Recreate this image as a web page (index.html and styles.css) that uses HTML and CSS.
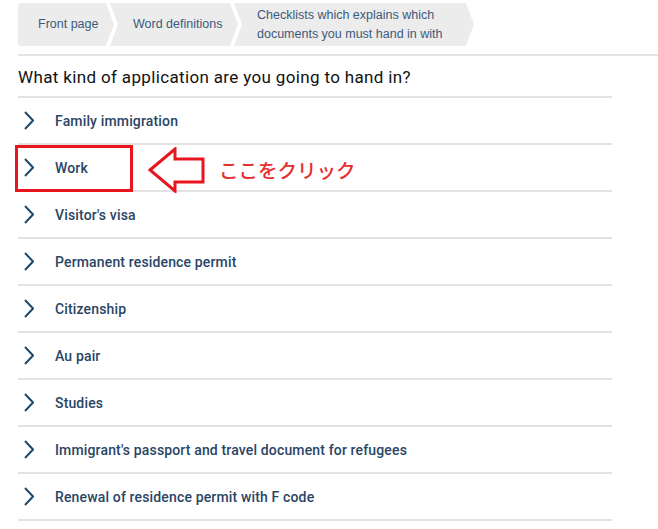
FILE: index.html
```html
<!DOCTYPE html>
<html>
<head>
<meta charset="utf-8">
<link rel="stylesheet" href="styles.css">
</head>
<body>
<nav class="crumbs">
  <a class="crumb first">Front page</a>
  <a class="crumb second">Word definitions</a>
  <a class="crumb third">Checklists which explains which<br>documents you must hand in with</a>
</nav>
<main class="content">
  <h1 class="title">What kind of application are you going to hand in?</h1>
  <ul class="list">
    <li class="row"><svg class="chev" viewBox="0 0 10 19"><path d="M1 1 L9 9.5 L1 18" /></svg><span>Family immigration</span></li>
    <li class="row"><svg class="chev" viewBox="0 0 10 19"><path d="M1 1 L9 9.5 L1 18" /></svg><span>Work</span></li>
    <li class="row"><svg class="chev" viewBox="0 0 10 19"><path d="M1 1 L9 9.5 L1 18" /></svg><span>Visitor's visa</span></li>
    <li class="row"><svg class="chev" viewBox="0 0 10 19"><path d="M1 1 L9 9.5 L1 18" /></svg><span>Permanent residence permit</span></li>
    <li class="row"><svg class="chev" viewBox="0 0 10 19"><path d="M1 1 L9 9.5 L1 18" /></svg><span>Citizenship</span></li>
    <li class="row"><svg class="chev" viewBox="0 0 10 19"><path d="M1 1 L9 9.5 L1 18" /></svg><span>Au pair</span></li>
    <li class="row"><svg class="chev" viewBox="0 0 10 19"><path d="M1 1 L9 9.5 L1 18" /></svg><span>Studies</span></li>
    <li class="row"><svg class="chev" viewBox="0 0 10 19"><path d="M1 1 L9 9.5 L1 18" /></svg><span>Immigrant's passport and travel document for refugees</span></li>
    <li class="row"><svg class="chev" viewBox="0 0 10 19"><path d="M1 1 L9 9.5 L1 18" /></svg><span>Renewal of residence permit with F code</span></li>
  </ul>
  <div class="highlight"></div>
  <svg class="arrow" viewBox="0 0 60 46"><polygon points="2,23 27,2 27,12 55,12 55,35 27,35 27,44" /></svg>
  <span class="note">ここをクリック</span>
</main>
</body>
</html>
```

FILE: styles.css
```css
html, body {
  margin: 0;
  padding: 0;
  background: #ffffff;
}

.crumbs {
  display: flex;
  margin: 3px 0 0 18px;
  padding-bottom: 8px;
  border-bottom: 2px solid #e4e4e4;
}

.crumb {
  display: flex;
  align-items: center;
  height: 43px;
  background: #ececec;
  color: #3d5a7c;
  font-family: "Liberation Sans", Arial, sans-serif;
  font-size: 12.5px;
  line-height: 19px;
  box-sizing: border-box;
}

.first {
  width: 96px;
  padding-left: 20px;
  border-radius: 3px 0 0 3px;
  clip-path: polygon(0 0, calc(100% - 8px) 0, 100% 50%, calc(100% - 8px) 100%, 0 100%);
}

.second {
  width: 128px;
  margin-left: -4px;
  padding-left: 23px;
  clip-path: polygon(0 0, calc(100% - 8px) 0, 100% 50%, calc(100% - 8px) 100%, 0 100%, 8px 50%);
}

.third {
  width: 240px;
  margin-left: -4px;
  padding-left: 23px;
  clip-path: polygon(0 0, calc(100% - 8px) 0, 100% 50%, calc(100% - 8px) 100%, 0 100%, 8px 50%);
}

.content {
  position: relative;
  margin-left: 18px;
  width: 594px;
}

.title {
  margin: 0;
  height: 42px;
  display: flex;
  align-items: center;
  padding-top: 2px;
  box-sizing: border-box;
  font-family: Roboto, "DejaVu Sans", sans-serif;
  font-weight: 400;
  font-size: 17px;
  letter-spacing: 0.35px;
  color: #111111;
  border-bottom: 2px solid #e2e2e2;
}

.list {
  list-style: none;
  margin: 0;
  padding: 0;
}

.row {
  display: flex;
  align-items: center;
  height: 45px;
  border-bottom: 2px solid #e2e2e2;
  font-family: Roboto, "DejaVu Sans", sans-serif;
  font-size: 14px;
  font-weight: 500;
  letter-spacing: 0.15px;
  color: #2a4565;
}

.chev {
  width: 10px;
  height: 19px;
  margin-left: 6px;
  margin-right: 21px;
  fill: none;
  stroke: #1f4a70;
  stroke-width: 2;
}

.highlight {
  position: absolute;
  left: -3px;
  top: 89px;
  width: 112px;
  height: 41px;
  border: 3px solid #e8151f;
}

.arrow {
  position: absolute;
  left: 130px;
  top: 91px;
  width: 60px;
  height: 46px;
  fill: none;
  stroke: #e8151f;
  stroke-width: 3;
  stroke-linejoin: miter;
}

.note {
  position: absolute;
  left: 201px;
  top: 102px;
  font-family: "Noto Sans CJK JP", sans-serif;
  font-size: 19.5px;
  font-weight: 500;
  line-height: 24px;
  color: #e53030;
}
```
